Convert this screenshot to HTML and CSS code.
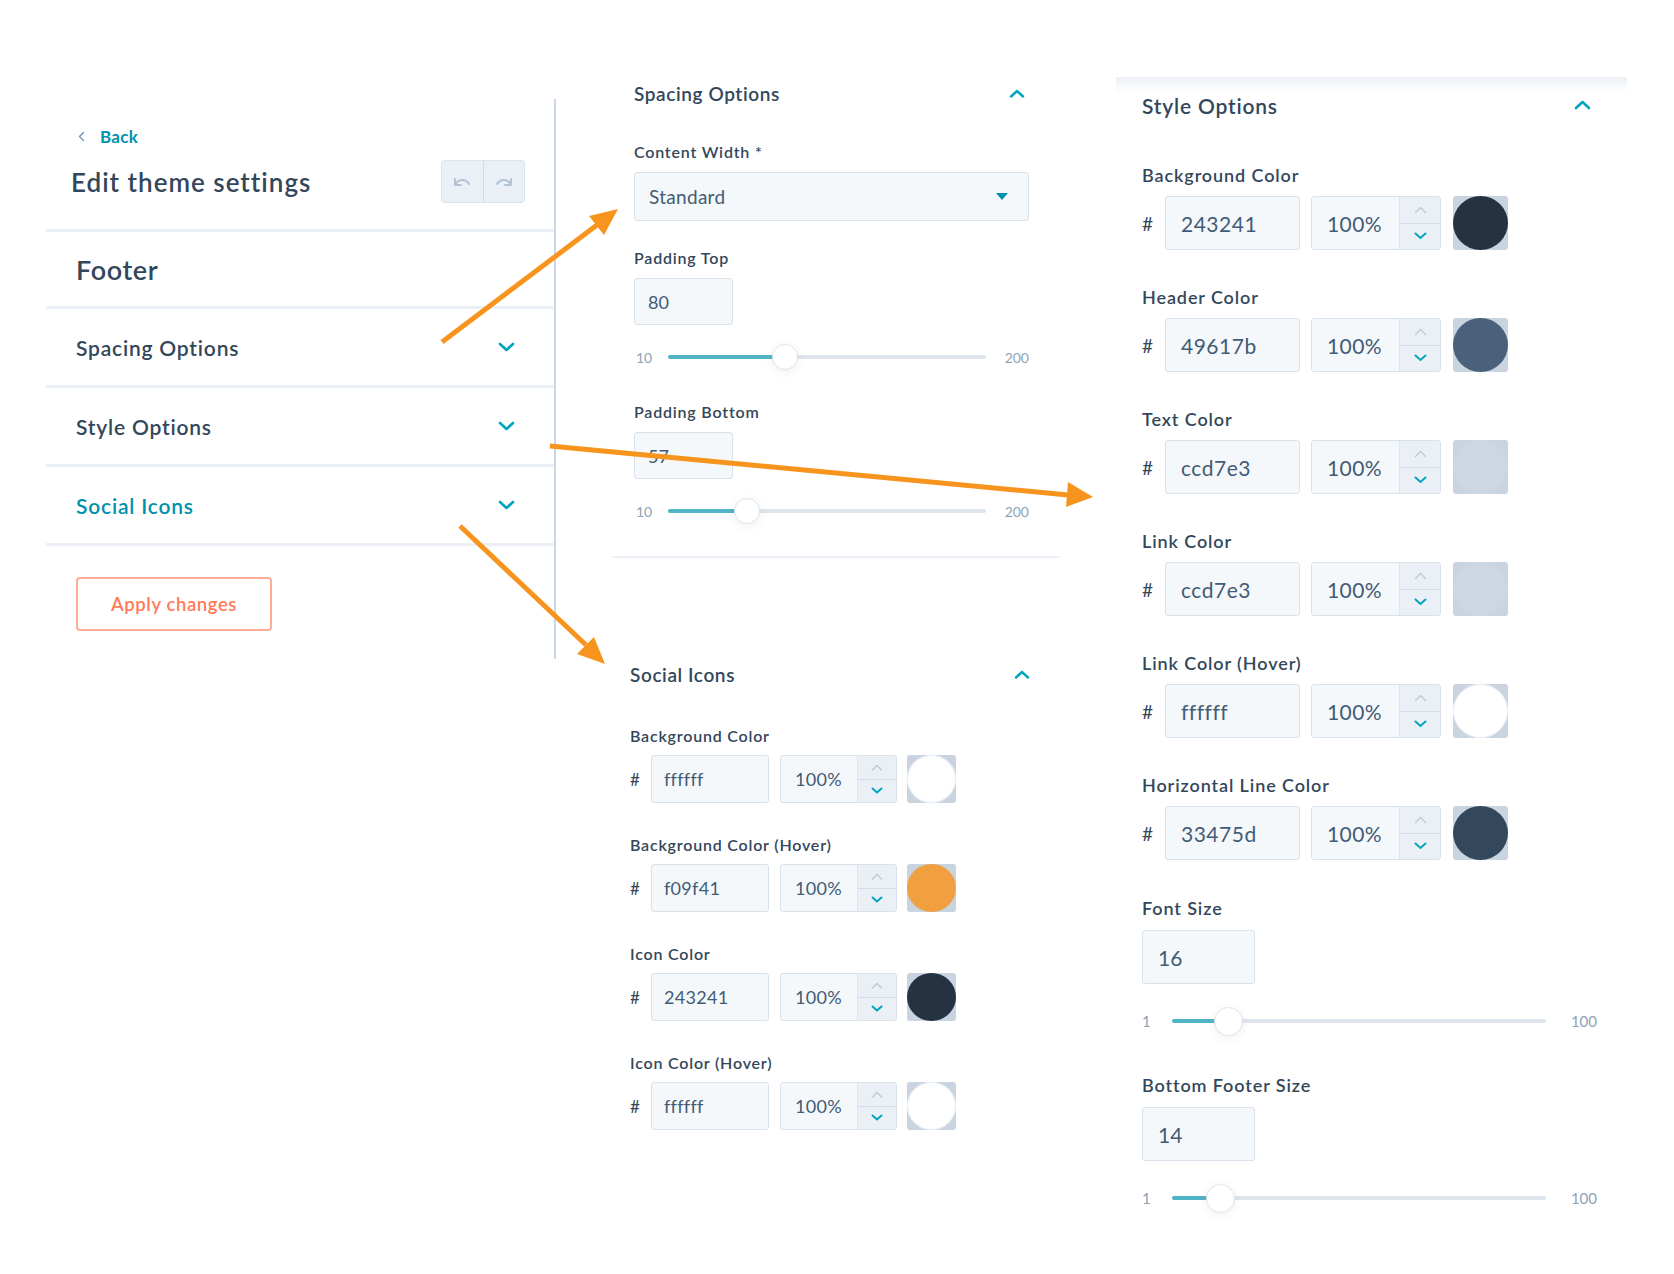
FILE: index.html
```html
<!DOCTYPE html>
<html lang="en">
<head>
    <meta charset="UTF-8">
    <meta name="viewport" content="width=device-width, initial-scale=1.0">
    <title>Edit theme settings - Footer</title>
    <link rel="stylesheet" href="styles.css">
</head>
<body>
    <div class="canvas">

        <!-- Left: theme settings sidebar -->
        <aside class="sidebar">
            <div class="sidebar-top">
                <a class="back" href="#">
                    <svg width="7" height="11" viewBox="0 0 7 11"><polyline points="5.5,1.5 1.5,5.5 5.5,9.5" fill="none" stroke="#7c98b6" stroke-width="1.5" stroke-linecap="round" stroke-linejoin="round"/></svg>
                    Back
                </a>
                <div class="sidebar-head">
                    <h1>Edit theme settings</h1>
                    <div class="history">
                        <button class="history-btn" aria-label="Undo">
                            <svg width="22" height="14" viewBox="0 0 22 14"><path d="M4 4v6h6M4 10C7 4 14 3 18 9" fill="none" stroke="#b3c3d5" stroke-width="2" stroke-linecap="round" stroke-linejoin="round"/></svg>
                        </button>
                        <button class="history-btn" aria-label="Redo">
                            <svg width="22" height="14" viewBox="0 0 22 14"><path d="M18 4v6h-6M18 10C15 4 8 3 4 9" fill="none" stroke="#b3c3d5" stroke-width="2" stroke-linecap="round" stroke-linejoin="round"/></svg>
                        </button>
                    </div>
                </div>
            </div>

            <div class="group group-title">Footer</div>
            <div class="group">
                <span>Spacing Options</span>
                <svg class="chev" width="17" height="10" viewBox="0 0 17 10"><polyline points="2,2 8.5,8 15,2" fill="none" stroke="#00a4bd" stroke-width="2.6" stroke-linecap="round" stroke-linejoin="round"/></svg>
            </div>
            <div class="group">
                <span>Style Options</span>
                <svg class="chev" width="17" height="10" viewBox="0 0 17 10"><polyline points="2,2 8.5,8 15,2" fill="none" stroke="#00a4bd" stroke-width="2.6" stroke-linecap="round" stroke-linejoin="round"/></svg>
            </div>
            <div class="group group-active">
                <span>Social Icons</span>
                <svg class="chev" width="17" height="10" viewBox="0 0 17 10"><polyline points="2,2 8.5,8 15,2" fill="none" stroke="#00a4bd" stroke-width="2.6" stroke-linecap="round" stroke-linejoin="round"/></svg>
            </div>

            <button class="apply-btn">Apply changes</button>
        </aside>

        <!-- Middle: spacing + social icons -->
        <div class="middle">
            <section class="panel spacing-panel">
                <div class="panel-head">
                    <h2>Spacing Options</h2>
                    <svg class="chev-up" width="16" height="9" viewBox="0 0 16 9"><polyline points="2,7.5 8,2 14,7.5" fill="none" stroke="#00a4bd" stroke-width="2.4" stroke-linecap="round" stroke-linejoin="round"/></svg>
                </div>

                <div class="field-label label-first">Content Width *</div>
                <div class="select">
                    <span>Standard</span>
                    <span class="caret"></span>
                </div>

                <div class="field-label label-after-select">Padding Top</div>
                <div class="num-input">80</div>
                <div class="slider">
                    <span class="slider-min">10</span>
                    <div class="track">
                        <div class="fill" style="width: 36.8%"></div>
                        <div class="thumb" style="left: 36.8%"></div>
                    </div>
                    <span class="slider-max">200</span>
                </div>

                <div class="field-label">Padding Bottom</div>
                <div class="num-input">57</div>
                <div class="slider">
                    <span class="slider-min">10</span>
                    <div class="track">
                        <div class="fill" style="width: 24.7%"></div>
                        <div class="thumb" style="left: 24.7%"></div>
                    </div>
                    <span class="slider-max">200</span>
                </div>
            </section>

            <section class="panel social-panel">
                <div class="panel-head">
                    <h2>Social Icons</h2>
                    <svg class="chev-up" width="16" height="9" viewBox="0 0 16 9"><polyline points="2,7.5 8,2 14,7.5" fill="none" stroke="#00a4bd" stroke-width="2.4" stroke-linecap="round" stroke-linejoin="round"/></svg>
                </div>

                <div class="field-label label-first">Background Color</div>
                <div class="color-row">
                    <span class="hash">#</span>
                    <div class="hex-input">ffffff</div>
                    <div class="pct-input">
                        <span class="pct-value">100%</span>
                        <div class="stepper">
                            <span class="step"><svg width="12" height="7" viewBox="0 0 12 7"><polyline points="1.5,6 6,1.5 10.5,6" fill="none" stroke="#bccad8" stroke-width="1.4" stroke-linecap="round"/></svg></span>
                            <span class="step"><svg width="12" height="7" viewBox="0 0 12 7"><polyline points="1.5,1.5 6,5.5 10.5,1.5" fill="none" stroke="#00a4bd" stroke-width="2" stroke-linecap="round"/></svg></span>
                        </div>
                    </div>
                    <div class="swatch"><div class="swatch-dot dot-light" style="background: #ffffff"></div></div>
                </div>

                <div class="field-label">Background Color (Hover)</div>
                <div class="color-row">
                    <span class="hash">#</span>
                    <div class="hex-input">f09f41</div>
                    <div class="pct-input">
                        <span class="pct-value">100%</span>
                        <div class="stepper">
                            <span class="step"><svg width="12" height="7" viewBox="0 0 12 7"><polyline points="1.5,6 6,1.5 10.5,6" fill="none" stroke="#bccad8" stroke-width="1.4" stroke-linecap="round"/></svg></span>
                            <span class="step"><svg width="12" height="7" viewBox="0 0 12 7"><polyline points="1.5,1.5 6,5.5 10.5,1.5" fill="none" stroke="#00a4bd" stroke-width="2" stroke-linecap="round"/></svg></span>
                        </div>
                    </div>
                    <div class="swatch"><div class="swatch-dot" style="background: #f09f41"></div></div>
                </div>

                <div class="field-label">Icon Color</div>
                <div class="color-row">
                    <span class="hash">#</span>
                    <div class="hex-input">243241</div>
                    <div class="pct-input">
                        <span class="pct-value">100%</span>
                        <div class="stepper">
                            <span class="step"><svg width="12" height="7" viewBox="0 0 12 7"><polyline points="1.5,6 6,1.5 10.5,6" fill="none" stroke="#bccad8" stroke-width="1.4" stroke-linecap="round"/></svg></span>
                            <span class="step"><svg width="12" height="7" viewBox="0 0 12 7"><polyline points="1.5,1.5 6,5.5 10.5,1.5" fill="none" stroke="#00a4bd" stroke-width="2" stroke-linecap="round"/></svg></span>
                        </div>
                    </div>
                    <div class="swatch"><div class="swatch-dot" style="background: #243241"></div></div>
                </div>

                <div class="field-label">Icon Color (Hover)</div>
                <div class="color-row">
                    <span class="hash">#</span>
                    <div class="hex-input">ffffff</div>
                    <div class="pct-input">
                        <span class="pct-value">100%</span>
                        <div class="stepper">
                            <span class="step"><svg width="12" height="7" viewBox="0 0 12 7"><polyline points="1.5,6 6,1.5 10.5,6" fill="none" stroke="#bccad8" stroke-width="1.4" stroke-linecap="round"/></svg></span>
                            <span class="step"><svg width="12" height="7" viewBox="0 0 12 7"><polyline points="1.5,1.5 6,5.5 10.5,1.5" fill="none" stroke="#00a4bd" stroke-width="2" stroke-linecap="round"/></svg></span>
                        </div>
                    </div>
                    <div class="swatch"><div class="swatch-dot dot-light" style="background: #ffffff"></div></div>
                </div>
            </section>
        </div>

        <!-- Right: style options -->
        <section class="panel style-panel">
            <div class="panel-head">
                <h2>Style Options</h2>
                <svg class="chev-up" width="17" height="10" viewBox="0 0 17 10"><polyline points="2,8 8.5,2 15,8" fill="none" stroke="#00a4bd" stroke-width="2.6" stroke-linecap="round" stroke-linejoin="round"/></svg>
            </div>

            <div class="field-label label-first">Background Color</div>
            <div class="color-row">
                <span class="hash">#</span>
                <div class="hex-input">243241</div>
                <div class="pct-input">
                    <span class="pct-value">100%</span>
                    <div class="stepper">
                        <span class="step"><svg width="13" height="8" viewBox="0 0 13 8"><polyline points="1.5,6.5 6.5,1.5 11.5,6.5" fill="none" stroke="#bccad8" stroke-width="1.4" stroke-linecap="round"/></svg></span>
                        <span class="step"><svg width="13" height="8" viewBox="0 0 13 8"><polyline points="1.5,1.5 6.5,6 11.5,1.5" fill="none" stroke="#00a4bd" stroke-width="2" stroke-linecap="round"/></svg></span>
                    </div>
                </div>
                <div class="swatch"><div class="swatch-dot" style="background: #243241"></div></div>
            </div>

            <div class="field-label">Header Color</div>
            <div class="color-row">
                <span class="hash">#</span>
                <div class="hex-input">49617b</div>
                <div class="pct-input">
                    <span class="pct-value">100%</span>
                    <div class="stepper">
                        <span class="step"><svg width="13" height="8" viewBox="0 0 13 8"><polyline points="1.5,6.5 6.5,1.5 11.5,6.5" fill="none" stroke="#bccad8" stroke-width="1.4" stroke-linecap="round"/></svg></span>
                        <span class="step"><svg width="13" height="8" viewBox="0 0 13 8"><polyline points="1.5,1.5 6.5,6 11.5,1.5" fill="none" stroke="#00a4bd" stroke-width="2" stroke-linecap="round"/></svg></span>
                    </div>
                </div>
                <div class="swatch"><div class="swatch-dot" style="background: #49617b"></div></div>
            </div>

            <div class="field-label">Text Color</div>
            <div class="color-row">
                <span class="hash">#</span>
                <div class="hex-input">ccd7e3</div>
                <div class="pct-input">
                    <span class="pct-value">100%</span>
                    <div class="stepper">
                        <span class="step"><svg width="13" height="8" viewBox="0 0 13 8"><polyline points="1.5,6.5 6.5,1.5 11.5,6.5" fill="none" stroke="#bccad8" stroke-width="1.4" stroke-linecap="round"/></svg></span>
                        <span class="step"><svg width="13" height="8" viewBox="0 0 13 8"><polyline points="1.5,1.5 6.5,6 11.5,1.5" fill="none" stroke="#00a4bd" stroke-width="2" stroke-linecap="round"/></svg></span>
                    </div>
                </div>
                <div class="swatch"><div class="swatch-dot" style="background: #ccd7e3"></div></div>
            </div>

            <div class="field-label">Link Color</div>
            <div class="color-row">
                <span class="hash">#</span>
                <div class="hex-input">ccd7e3</div>
                <div class="pct-input">
                    <span class="pct-value">100%</span>
                    <div class="stepper">
                        <span class="step"><svg width="13" height="8" viewBox="0 0 13 8"><polyline points="1.5,6.5 6.5,1.5 11.5,6.5" fill="none" stroke="#bccad8" stroke-width="1.4" stroke-linecap="round"/></svg></span>
                        <span class="step"><svg width="13" height="8" viewBox="0 0 13 8"><polyline points="1.5,1.5 6.5,6 11.5,1.5" fill="none" stroke="#00a4bd" stroke-width="2" stroke-linecap="round"/></svg></span>
                    </div>
                </div>
                <div class="swatch"><div class="swatch-dot" style="background: #ccd7e3"></div></div>
            </div>

            <div class="field-label">Link Color (Hover)</div>
            <div class="color-row">
                <span class="hash">#</span>
                <div class="hex-input">ffffff</div>
                <div class="pct-input">
                    <span class="pct-value">100%</span>
                    <div class="stepper">
                        <span class="step"><svg width="13" height="8" viewBox="0 0 13 8"><polyline points="1.5,6.5 6.5,1.5 11.5,6.5" fill="none" stroke="#bccad8" stroke-width="1.4" stroke-linecap="round"/></svg></span>
                        <span class="step"><svg width="13" height="8" viewBox="0 0 13 8"><polyline points="1.5,1.5 6.5,6 11.5,1.5" fill="none" stroke="#00a4bd" stroke-width="2" stroke-linecap="round"/></svg></span>
                    </div>
                </div>
                <div class="swatch"><div class="swatch-dot dot-light" style="background: #ffffff"></div></div>
            </div>

            <div class="field-label">Horizontal Line Color</div>
            <div class="color-row">
                <span class="hash">#</span>
                <div class="hex-input">33475d</div>
                <div class="pct-input">
                    <span class="pct-value">100%</span>
                    <div class="stepper">
                        <span class="step"><svg width="13" height="8" viewBox="0 0 13 8"><polyline points="1.5,6.5 6.5,1.5 11.5,6.5" fill="none" stroke="#bccad8" stroke-width="1.4" stroke-linecap="round"/></svg></span>
                        <span class="step"><svg width="13" height="8" viewBox="0 0 13 8"><polyline points="1.5,1.5 6.5,6 11.5,1.5" fill="none" stroke="#00a4bd" stroke-width="2" stroke-linecap="round"/></svg></span>
                    </div>
                </div>
                <div class="swatch"><div class="swatch-dot" style="background: #33475d"></div></div>
            </div>

            <div class="field-label label-size">Font Size</div>
            <div class="num-input">16</div>
            <div class="slider">
                <span class="slider-min">1</span>
                <div class="track">
                    <div class="fill" style="width: 15.2%"></div>
                    <div class="thumb" style="left: 15.2%"></div>
                </div>
                <span class="slider-max">100</span>
            </div>

            <div class="field-label label-size2">Bottom Footer Size</div>
            <div class="num-input">14</div>
            <div class="slider">
                <span class="slider-min">1</span>
                <div class="track">
                    <div class="fill" style="width: 13.1%"></div>
                    <div class="thumb" style="left: 13.1%"></div>
                </div>
                <span class="slider-max">100</span>
            </div>
        </section>

        <!-- Annotation arrows drawn over the screenshots -->
        <svg class="arrows" width="1674" height="1274" viewBox="0 0 1674 1274">
            <g stroke="#f7941d" stroke-width="5" fill="none">
                <line x1="442" y1="342" x2="597" y2="225"/>
                <line x1="550" y1="446" x2="1068" y2="495"/>
                <line x1="460" y1="526" x2="586" y2="645"/>
            </g>
            <g fill="#f7941d">
                <polygon points="618,209 604,235 589,216"/>
                <polygon points="1093,497 1066,507 1068,482"/>
                <polygon points="605,664 577,654 594,637"/>
            </g>
        </svg>
    </div>
</body>
</html>
```

FILE: styles.css
```css
/* Global Styles */
* {
    margin: 0;
    padding: 0;
    box-sizing: border-box;
}

body {
    font-family: 'Lato', 'Noto Sans', sans-serif;
    background: #fff;
    color: #33475b;
}

button {
    font-family: inherit;
    cursor: pointer;
}

.canvas {
    position: relative;
    width: 1674px;
    height: 1274px;
    display: flex;
    align-items: flex-start;
    padding-left: 46px;
    overflow: hidden;
}

/* Sidebar */
.sidebar {
    width: 510px;
    height: 560px;
    margin-top: 99px;
    border-right: 2px solid #c8d8ec;
}

.sidebar-top {
    height: 133px;
    padding: 27px 29px 0 25px;
    border-bottom: 3px solid #eaf0f6;
}

.back {
    display: flex;
    align-items: center;
    gap: 15px;
    height: 20px;
    margin-left: 7px;
    font-size: 17px;
    font-weight: 700;
    letter-spacing: 0.3px;
    color: #0091ae;
    text-decoration: none;
}

.sidebar-head {
    display: flex;
    justify-content: space-between;
    align-items: center;
    height: 43px;
    margin-top: 14px;
}

.sidebar-head h1 {
    font-size: 26px;
    font-weight: 600;
    letter-spacing: 1px;
    color: #33475b;
}

.history {
    display: flex;
    width: 84px;
    height: 43px;
    border: 1px solid #dbe3ec;
    border-radius: 4px;
    background: #eaf0f6;
    overflow: hidden;
}

.history-btn {
    flex: 1;
    display: flex;
    align-items: center;
    justify-content: center;
    border: none;
    background: transparent;
}

.history-btn + .history-btn {
    border-left: 1px solid #d3dde8;
}

.group {
    display: flex;
    justify-content: space-between;
    align-items: center;
    height: 79px;
    padding: 0 39px 0 30px;
    border-bottom: 3px solid #eaf0f6;
    font-size: 21px;
    font-weight: 600;
    letter-spacing: 0.8px;
}

.group-title {
    height: 77px;
    font-size: 27px;
    letter-spacing: 0.6px;
}

.group-active {
    color: #0091ae;
}

.apply-btn {
    display: block;
    width: 196px;
    height: 54px;
    margin: 31px 0 0 30px;
    border: 2px solid #ffab96;
    border-radius: 4px;
    background: #fff;
    color: #ff7a59;
    font-size: 18.5px;
    font-weight: 600;
    letter-spacing: 0.6px;
}

/* Panels */
.middle {
    display: flex;
    flex-direction: column;
    width: 448px;
    margin-left: 56px;
    margin-top: 69px;
}

.panel-head {
    display: flex;
    justify-content: space-between;
    align-items: center;
    height: 48px;
}

.panel-head h2 {
    font-size: 19px;
    font-weight: 600;
    letter-spacing: 0.6px;
}

.spacing-panel {
    padding: 0 31px 30px 22px;
    border-bottom: 2px solid #eaf0f6;
}

.spacing-panel .chev-up {
    margin-right: 4px;
}

.social-panel {
    margin-top: 92px;
    padding: 0 30px 0 18px;
}

.social-panel .panel-head {
    width: 400px;
}

.field-label {
    height: 20px;
    line-height: 20px;
    margin-top: 30px;
    font-size: 16px;
    font-weight: 600;
    letter-spacing: 0.8px;
}

.label-first {
    margin-top: 25px;
}

.label-after-select {
    margin-top: 27px;
}

.social-panel .field-label {
    margin-top: 32px;
}

.social-panel .label-first {
    margin-top: 28px;
}

.select {
    display: flex;
    justify-content: space-between;
    align-items: center;
    height: 49px;
    margin-top: 10px;
    padding: 0 20px 0 14px;
    background: #f5f8fa;
    border: 1px solid #d9e1ea;
    border-radius: 3px;
    font-size: 19px;
    letter-spacing: 0.3px;
    color: #425b76;
}

.caret {
    width: 0;
    height: 0;
    border-left: 6.5px solid transparent;
    border-right: 6.5px solid transparent;
    border-top: 7px solid #0091ae;
}

.num-input {
    display: flex;
    align-items: center;
    width: 99px;
    height: 47px;
    margin-top: 10px;
    padding-left: 13px;
    background: #f5f8fa;
    border: 1px solid #d9e1ea;
    border-radius: 3px;
    font-size: 18px;
    color: #425b76;
}

/* Sliders */
.slider {
    display: flex;
    align-items: center;
    height: 30px;
    margin-top: 17px;
}

.slider-min {
    width: 34px;
    padding-left: 2px;
    font-size: 14px;
    color: #8ea3b9;
}

.slider-max {
    width: 43px;
    text-align: right;
    font-size: 14px;
    color: #8ea3b9;
}

.track {
    position: relative;
    flex: 1;
    height: 4px;
    border-radius: 2px;
    background: #dfe5ec;
}

.fill {
    height: 100%;
    border-radius: 2px;
    background: #51b3c6;
}

.thumb {
    position: absolute;
    top: 50%;
    width: 26px;
    height: 26px;
    margin: -13px 0 0 -13px;
    border-radius: 50%;
    background: #fff;
    border: 1px solid #dfe5ec;
    box-shadow: 0 2px 10px rgba(45, 62, 80, 0.08);
}

/* Colour rows */
.color-row {
    display: flex;
    align-items: center;
    height: 48px;
    margin-top: 9px;
}

.hash {
    width: 21px;
    font-size: 17px;
    color: #33475b;
}

.hex-input {
    display: flex;
    align-items: center;
    width: 118px;
    height: 100%;
    padding-left: 12px;
    background: #f5f8fa;
    border: 1px solid #d9e1ea;
    border-radius: 3px;
    font-size: 18px;
    letter-spacing: 0.3px;
    color: #425b76;
}

.pct-input {
    display: flex;
    width: 117px;
    height: 100%;
    margin-left: 11px;
    background: #f5f8fa;
    border: 1px solid #d9e1ea;
    border-radius: 3px;
    overflow: hidden;
}

.pct-value {
    flex: 1;
    display: flex;
    align-items: center;
    padding-left: 14px;
    font-size: 18px;
    letter-spacing: 0.3px;
    color: #425b76;
}

.stepper {
    display: flex;
    flex-direction: column;
    width: 39px;
    background: #eaf0f6;
    border-left: 1px solid #dfe6ee;
}

.step {
    flex: 1;
    display: flex;
    align-items: center;
    justify-content: center;
}

.step + .step {
    border-top: 1px solid #d5dee8;
}

.swatch {
    width: 49px;
    height: 100%;
    margin-left: 10px;
    border-radius: 3px;
    background: #c9d4e0;
}

.swatch-dot {
    width: 100%;
    height: 100%;
    border-radius: 50%;
}

.dot-light {
    box-shadow: inset 0 0 0 1px #e6ecf2;
}

/* Right panel, a larger capture */
.style-panel {
    width: 511px;
    margin-left: 56px;
    margin-top: 77px;
    padding: 12px 30px 40px 26px;
    background: linear-gradient(#ecf0f5, #fff 16px);
}

.style-panel .panel-head {
    height: 32px;
}

.style-panel .panel-head h2 {
    font-size: 21px;
    letter-spacing: 0.8px;
}

.style-panel .chev-up {
    margin-right: 6px;
}

.style-panel .field-label {
    margin-top: 37px;
    font-size: 18px;
    letter-spacing: 0.9px;
}

.style-panel .label-first {
    margin-top: 44px;
}

.style-panel .label-size {
    margin-top: 38px;
}

.style-panel .label-size2 {
    margin-top: 39px;
}

.style-panel .color-row {
    height: 54px;
    margin-top: 11px;
}

.style-panel .hash {
    width: 23px;
    font-size: 19px;
}

.style-panel .hex-input {
    width: 135px;
    padding-left: 15px;
    font-size: 21px;
    letter-spacing: 0.5px;
}

.style-panel .pct-input {
    width: 130px;
}

.style-panel .pct-value {
    padding-left: 15px;
    font-size: 21px;
    letter-spacing: 0.4px;
}

.style-panel .stepper {
    width: 41px;
}

.style-panel .swatch {
    width: 55px;
    margin-left: 12px;
}

.style-panel .num-input {
    width: 113px;
    height: 54px;
    margin-top: 12px;
    padding-left: 15px;
    font-size: 21px;
}

.style-panel .slider {
    margin-top: 22px;
}

.style-panel .slider-min {
    width: 30px;
    padding-left: 0;
    font-size: 15px;
}

.style-panel .slider-max {
    width: 51px;
    font-size: 15px;
}

.style-panel .thumb {
    width: 29px;
    height: 29px;
    margin: -14.5px 0 0 -14.5px;
}

/* Arrows overlay */
.arrows {
    position: absolute;
    top: 0;
    left: 0;
    pointer-events: none;
}
```
